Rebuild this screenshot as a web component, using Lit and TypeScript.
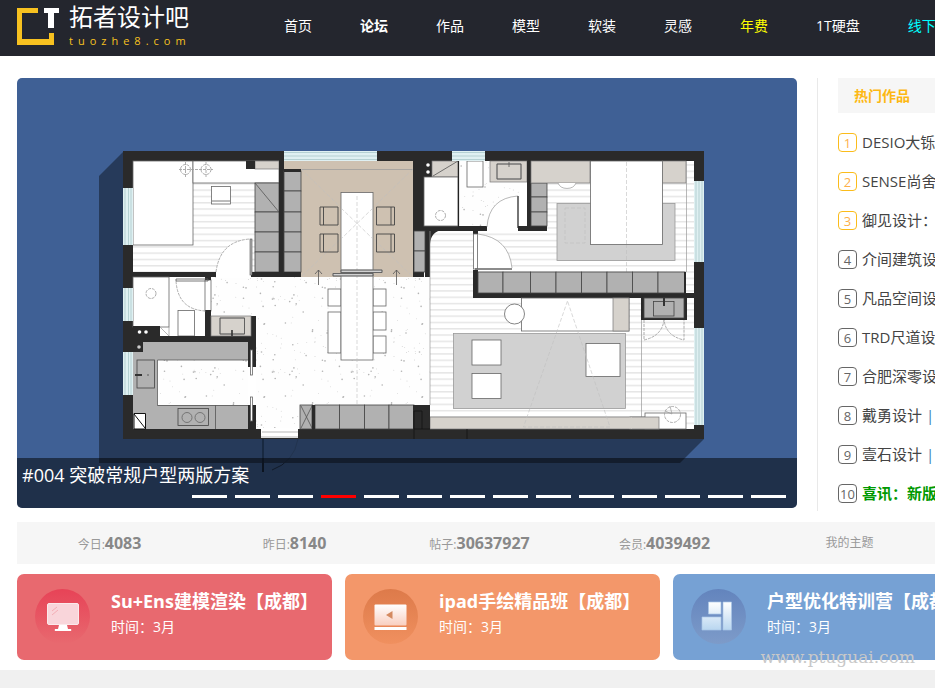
import { LitElement, html, css, svg } from "lit";
import { customElement, property, state } from "lit/decorators.js";
import { classMap } from "lit/directives/class-map.js";

const range = (n: number) => Array.from({ length: n }, (_, i) => i);

@customElement("site-header")
class SiteHeader extends LitElement {
  static styles = css`
    :host { display: block; background: #24262e; color: #fff; overflow: hidden; }
    .bar { display: flex; height: 56px; padding-left: 17px; }
    .logo { display: flex; gap: 10px; width: 243px; flex: none; color: #fff; text-decoration: none; }
    .mark { width: 42px; height: 37px; margin-top: 8px; flex: none; }
    .words { display: flex; flex-direction: column; }
    .name { font-size: 24px; line-height: 34px; white-space: nowrap; }
    .domain { font-size: 11px; line-height: 14px; letter-spacing: 5px; color: #f7c120; white-space: nowrap; }
    nav { display: flex; }
    .item { padding: 0 24px; line-height: 52px; font-size: 14px; color: #fff; text-decoration: none; white-space: nowrap; }
    .current { font-weight: 700; }
    .yellow { color: #ff0; }
    .cyan { color: #0ff; }
  `;
  private items = [
    ["首页", ""], ["论坛", "current"], ["作品", ""], ["模型", ""], ["软装", ""],
    ["灵感", ""], ["年费", "yellow"], ["1T硬盘", ""], ["线下课", "cyan"],
  ];
  render() {
    return html`<header class="bar">
      <a class="logo" href="#">
        <svg class="mark" viewBox="0 0 42 37" aria-hidden="true">
          <path fill="#f7c120" d="M0 0H21V5H5V31H32V25H37V37H0Z" />
          <path fill="#fff" d="M27 0H42V5H37V20H31V5H27Z" />
        </svg>
        <span class="words"><span class="name">拓者设计吧</span><span class="domain">tuozhe8.com</span></span>
      </a>
      <nav>${this.items.map(([t, c]) => html`<a class="item ${c}" href="#">${t}</a>`)}</nav>
    </header>`;
  }
}

type Box = [number, number, number, number];
const rects = (cls: string, list: Box[]) =>
  list.map(([x1, y1, x2, y2]) => svg`<rect class=${cls} x=${x1} y=${y1} width=${x2 - x1} height=${y2 - y1} />`);

const noise = (n: number) => {
  const v = Math.sin(n * 127.1 + 11.7) * 43758.5453;
  return v - Math.floor(v);
};
const speckles = range(70).map((i) => [
  Math.round(noise(i) * 790) / 10,
  Math.round(noise(i + 500) * 730) / 10,
  i % 3 ? 0.4 : 0.8,
]);

@customElement("floor-plan")
class FloorPlan extends LitElement {
  static styles = css`
    :host { display: block; }
    svg { display: block; width: 100%; height: 100%; }
    .wall { fill: #2a2a2a; }
    .white { fill: #fff; }
    .wood { fill: url(#wood); }
    .stone { fill: url(#stone); }
    .box { fill: #fff; stroke: #666; stroke-width: 0.8; }
    .tan { fill: #cec1b1; }
    .beige { fill: #d6d2cc; stroke: #777; stroke-width: 0.7; }
    .cab { fill: #b1b1b1; stroke: #444; stroke-width: 0.8; }
    .grey { fill: #b1b1b1; }
    .rug { fill: #d1d1d1; stroke: #999; stroke-width: 0.8; }
    .glass { fill: #dff0f2; }
    .line { fill: none; stroke: #555; stroke-width: 0.8; }
    .soft { fill: none; stroke: #999; stroke-width: 0.7; }
    .pane { fill: none; stroke: #a3c3c6; stroke-width: 0.7; }
    .dash { fill: none; stroke: #999; stroke-width: 0.8; stroke-dasharray: 3 1; }
    .faint { fill: none; stroke: #c0c0c0; stroke-width: 0.6; stroke-dasharray: 4 2; }
  `;
  render() {
    return html`<svg viewBox="17 78 780 430" role="img" aria-label="户型平面图">
      <defs>
        <pattern id="wood" width="20" height="6.3" y="4" patternUnits="userSpaceOnUse">
          <rect width="20" height="7" fill="#fff" /><rect y="3" width="20" height="1" fill="#dadada" />
        </pattern>
        <pattern id="stone" width="79" height="73" patternUnits="userSpaceOnUse">
          <rect width="79" height="73" fill="#fefefe" />
          ${speckles.map(([x, y, r]) => svg`<circle cx=${x} cy=${y} r=${r} fill="#b4b4b4" />`)}
        </pattern>
      </defs>
      <rect x="17" y="78" width="780" height="430" fill="#3f6095" />
      <path fill="#263a5a" d="M99 176L124 151L704 439L680 463H99Z" />
      <path d="M263 439V472" stroke="#182941" stroke-width="2" fill="none" />
      <path d="M298 439Q294 462 272 470" stroke="#22344f" fill="none" />
      ${rects("wall", [[123, 151, 704, 439]])}
      ${rects("white", [[133, 161, 694, 429]])}
      ${rects("wood", [[133, 183, 279, 272], [430, 231, 694, 429], [531, 161, 694, 272]])}
      ${rects("stone", [[211, 277, 430, 429], [459, 161, 527, 226]])}

      ${rects("box", [[133, 161, 193, 245], [193, 161, 279, 183], [211.5, 186.5, 230.5, 204]])}
      <path class="line" d="M212 201H230" />
      <circle class="dash" cx="185.500" cy="169.500" r="5" /><circle class="dash" cx="206" cy="169.500" r="5" />
      <path class="dash" d="M179 169.500H213M185.500 162V178M206 162V178" />
      ${rects("beige", [[255, 161, 279, 169]])}
      ${rects("cab", [[255, 183, 279, 212], [255, 212, 279, 232], [255, 232, 279, 252], [255, 252, 279, 272]])}
      <path class="line" d="M255 183L279 212" />
      <path d="M216 272Q220 241 250 239V272Z" fill="#fff" /><path class="dash" d="M216 272Q220 241 250 239" />
      ${rects("wall", [[246, 161, 255, 169], [279, 151, 284, 277], [133, 272, 216, 277], [251, 272, 301, 277]])}
      ${rects("white", [[216, 272, 251, 278]])}
      <rect class="grey" x="250" y="239" width="2" height="36" stroke="#555" stroke-width=".6" />

      ${rects("tan", [[284, 161, 413, 277]])}
      <path class="soft" d="M284 169.500H413" />
      <path class="faint" d="M301 169L413 277M413 169L301 277" />
      ${rects("cab", [[284, 171, 301, 191], [284, 191, 301, 212], [284, 212, 301, 232], [284, 232, 301, 252], [284, 252, 301, 272]])}
      ${rects("wall", [[284, 169, 301, 172], [284, 272, 301, 277]])}
      <g fill="none" stroke="#444" stroke-width=".9">
        ${[207, 234].map((y) => svg`<path d="M320 ${y}H338V${y + 18}H320ZM323.500 ${y}V${y + 18}M376.500 ${y}H394.500V${y + 18}H376.500ZM391 ${y}V${y + 18}" />`)}
      </g>
      ${rects("box", [[328, 289, 341, 306], [328, 312, 341, 353], [373, 289, 386, 306], [373, 312, 386, 330], [373, 336, 386, 353], [341, 192.5, 373, 360]])}
      <path class="faint" d="M357 196V404M341 208L373 239M373 208L341 239" />
      ${rects("rug", [[341, 270, 382, 272.5], [333, 273.5, 373, 276]])}
      <path class="line" d="M341 270H382V272.500H341ZM333 273.500H373V276H333Z" />
      <path class="line" d="M318.500 285V270M315 274L318.500 270L322 274M396.500 285V270M393 274L396.500 270L400 274" />

      ${rects("wall", [[413, 151, 424, 277], [424, 226, 487, 231], [425, 226, 430, 277], [423, 161, 432, 177]])}
      ${rects("cab", [[414, 231, 425, 251], [414, 251, 425, 272]])}
      <path class="wall" d="M429 230H443Q431 231 430 244H429Z" />
      <circle cx="428" cy="165" r="1.800" fill="#fff" /><circle cx="428" cy="172" r="1.800" fill="#fff" />
      ${rects("beige", [[432, 161, 458, 177], [490, 161, 527, 182], [497, 164, 521, 179]])}
      ${rects("box", [[424, 177, 458, 226], [467, 161, 483, 187]])}
      <path class="line" d="M433 176L458 161M497 164H521V179H497ZM509 162V167" />
      <path d="M458.500 155V227" stroke="#222" stroke-width="1.200" />
      <circle class="dash" cx="440.500" cy="215.500" r="5" />
      ${rects("white", [[487, 226, 518, 231]])}
      <path d="M487 226Q489 198 518 196V228H487Z" fill="#fff" /><path class="soft" d="M487 227Q489 198 518 196" />
      <path d="M518 196V228" stroke="#666" stroke-width="1.800" />

      ${rects("wall", [[527, 161, 531, 230], [518, 226, 547, 231]])}
      ${rects("cab", [[531, 183, 547, 197], [531, 197, 547, 212], [531, 212, 547, 226]])}
      ${rects("beige", [[531, 161, 590, 183], [662, 161, 686, 183]])}
      ${rects("rug", [[557, 203.5, 675, 260.5]])}
      <path class="faint" d="M565 208H585V243H565ZM626.500 244V272" />
      <path d="M558 183A9.500 8 0 0 0 576 183" fill="#fff" stroke="#999" stroke-width=".7" />
      <path class="soft" d="M686.500 161V272" />
      ${rects("box", [[590.5, 161, 662.5, 244.5]])}
      <path class="faint" d="M626.500 162V244" />
      ${rects("wall", [[473, 231, 478, 234], [473, 270, 478, 298], [473, 293, 704, 298]])}
      ${rects("box", [[473.5, 234, 477.5, 269]])}
      <path d="M478 234Q509 238 512 268H478Z" fill="#fff" /><path class="soft" d="M478 234Q509 238 512 268" />
      <path d="M475 269H512" stroke="#666" stroke-width="1.600" />
      ${rects("cab", [[478, 272, 503, 293], [503, 272, 530.5, 293], [530.5, 272, 556, 293], [556, 272, 581.5, 293], [581.5, 272, 607, 293], [607, 272, 632.5, 293], [632.5, 272, 658, 293], [658, 272, 685, 293]])}
      ${rects("wall", [[684, 272, 686, 294]])}

      ${rects("box", [[521.5, 298, 629, 331]])}
      ${rects("beige", [[613, 298, 629, 331]])}
      <circle class="box" cx="514.500" cy="314" r="10" />
      ${rects("wall", [[641, 298, 687, 320]])}
      ${rects("cab", [[644, 298, 684, 318], [653.5, 301.5, 674, 316]])}
      <path d="M664 298V306" stroke="#333" stroke-width="2" />
      <path class="dash" d="M644 320V340Q662 336 664 320Q666 336 684 340V320" />
      <path class="soft" d="M641.500 320V417M430 231V405" />
      ${rects("rug", [[453.5, 333.5, 625.5, 408.5]])}
      ${rects("box", [[472, 340, 501, 365], [472, 373.5, 501, 398.5], [586, 343.5, 620, 376.5]])}
      ${rects("beige", [[430, 417, 659, 429]])}
      ${rects("box", [[645, 413, 686, 429]])}
      ${rects("beige", [[630, 417, 659, 429]])}
      <rect x="629" y="417.500" width="3" height="11" fill="#d6d2cc" />
      <path class="faint" d="M567.500 301L523.500 427H610Z" />
      <circle class="dash" cx="672.500" cy="414.500" r="8" /><path class="soft" d="M670 406L672 414L665 411" />

      ${rects("cab", [[300, 405, 312, 429], [315, 405, 339.5, 429], [339.5, 405, 364.5, 429], [364.5, 405, 389, 429], [389, 405, 414, 429]])}
      <path class="line" d="M301 406L312 428M312 406L301 428" />
      ${rects("wall", [[312, 405, 315, 429], [413, 405, 430, 430]])}
      <path d="M414 439V411H422V429M467 429V439M414 429H430" stroke="#111" fill="none" stroke-width=".8" />
      ${rects("white", [[261, 428, 298, 438]])}
      <path class="soft" d="M262 432H298M261 437H298" />

      ${rects("box", [[133, 277, 169, 327], [178, 310.5, 194.5, 336], [205, 280, 211, 311]])}
      <circle class="dash" cx="151" cy="293.500" r="5" />
      ${rects("wall", [[133, 326, 160, 336], [205, 272, 211, 280], [205, 310, 211, 336], [123, 336, 256, 342], [251, 316, 256, 342]])}
      <circle cx="139.500" cy="332" r="1.800" fill="#fff" /><circle cx="146" cy="332" r="1.800" fill="#fff" />
      <path class="soft" d="M160 327L169 336V327" />
      <path class="dash" d="M176 281Q178 310 206 311" />
      <path class="line" d="M176 279H208V281H176Z" />
      ${rects("beige", [[211, 316, 251, 336], [220, 318, 244.5, 334]])}
      <path class="line" d="M220 318H244.500V334H220Z" /><path d="M232 330V336" stroke="#333" stroke-width="1.600" />

      ${rects("grey", [[133, 342, 248, 429]])}
      ${rects("stone", [[157, 360, 248, 405]])}
      <path class="line" d="M248 360H157.500V405.500H248M215.500 405V429" />
      ${rects("white", [[248, 366, 256, 405]])}
      ${rects("wall", [[248, 342, 256, 367], [248, 405, 256, 429], [133, 342, 143, 352]])}
      ${rects("box", [[250.5, 350, 252.5, 375], [250.5, 397, 252.5, 421]])}
      <circle cx="139" cy="347" r="1.800" fill="#ccc" />
      ${rects("cab", [[137, 360, 154.5, 388], [178, 408.5, 208.5, 425.5]])}
      <path d="M135 375H142" stroke="#333" stroke-width="2" /><circle cx="148" cy="375" r="1" fill="#777" />
      <g fill="none" stroke="#666" stroke-width=".8"><circle cx="187" cy="417.500" r="5" /><circle cx="200" cy="417.500" r="5" /></g>
      <path d="M134 413.500H145.500V429H134Z" fill="#fff" stroke="#111" /><path d="M134 414L145 428" stroke="#111" />

      ${rects("glass", [[284, 151, 377, 161], [452, 151, 485, 161], [123, 188, 133, 245], [123, 288, 133, 321], [123, 352, 133, 395], [694, 181, 704, 262], [694, 328, 704, 425]])}
      <path class="pane" d="M284 152.500H377M284 156H377M284 159.500H377M452 152.500H485M452 156H485M452 159.500H485" />
      <path class="pane" d="M125 188V245M128.500 188V245M131 188V245M125 288V321M128.500 288V321M131 288V321M125 352V395M128.500 352V395M131 352V395" />
      <path class="pane" d="M696 181V262M699 181V262M702 181V262M696 328V425M699 328V425M702 328V425" />
    </svg>`;
  }
}

@customElement("hero-carousel")
class HeroCarousel extends LitElement {
  static styles = css`
    :host { display: block; position: relative; overflow: hidden; border-radius: 5px; aspect-ratio: 780 / 430; }
    floor-plan { height: 100%; }
    .caption { position: absolute; left: 0; right: 0; bottom: 0; height: 50px; box-sizing: border-box; padding: 1px 5px 0; background: rgba(23, 28, 32, 0.65); background: rgba(0, 0, 0, 0.5); color: #fff; }
    .title { display: block; font-size: 18px; line-height: 32px; color: inherit; text-decoration: none; }
    .dots { display: flex; justify-content: flex-end; gap: 8px; padding: 4px 6px 0 0; }
    .dot { width: 35px; height: 3px; padding: 0; border: 0; background: #fff; }
    .on { background: #f00; }
  `;
  @state() active = 3;
  render() {
    return html`<floor-plan></floor-plan>
      <div class="caption">
        <a class="title" href="#">#004 突破常规户型两版方案</a>
        <div class="dots">${range(14).map((i) => html`<button class=${classMap({ dot: true, on: i === this.active })}
          aria-label="第${i + 1}张" @click=${() => { this.active = i; }}></button>`)}</div>
      </div>`;
  }
}

@customElement("hot-works")
class HotWorks extends LitElement {
  static styles = css`
    :host { display: block; border-left: 1px solid #e9e9e9; padding-left: 20px; overflow: hidden; height: 433px; box-sizing: border-box; }
    h2 { margin: 0; padding-left: 16px; background: #f6f6f6; color: #fdb813; font-size: 14px; line-height: 35px; white-space: nowrap; }
    ol { list-style: none; margin: 10px 0 0; padding: 0; }
    li { display: flex; align-items: center; gap: 5px; height: 39px; }
    .num { flex: none; width: 19px; height: 19px; box-sizing: border-box; border: 1px solid #666; border-radius: 4px; color: #666; font-size: 13px; line-height: 18px; text-align: center; }
    .top { border-color: #fbbc1b; color: #fdb04a; }
    .link { color: #444; font-size: 15px; line-height: 24px; padding-bottom: 2px; text-decoration: none; white-space: nowrap; }
    .news { color: #090; font-weight: 700; }
    .sep { color: #3a7fb5; }
  `;
  private works = ["DESIO大铄", "SENSE尚舍", "御见设计：", "介间建筑设计", "凡品空间设计", "TRD尺道设计", "合肥深零设计", "戴勇设计", "壹石设计", "喜讯：新版"];
  render() {
    return html`<h2>热门作品</h2>
      <ol>${this.works.map((w, i) => html`<li><span class=${classMap({ num: true, top: i < 3 })}>${i + 1}</span><a
        class=${classMap({ link: true, news: i === 9 })} href="#">${w}${i === 7 || i === 8 ? html`<span class="sep"> |</span>` : ""}</a></li>`)}</ol>`;
  }
}

@customElement("course-card")
class CourseCard extends LitElement {
  static styles = css`
    :host { display: block; flex: 0 0 315px; }
    .card { display: flex; gap: 21px; height: 86px; box-sizing: border-box; padding: 13px 0 0 18px; border-radius: 7px; color: #fff; text-decoration: none; }
    .red { background: #e8696f; }
    .orange { background: #f3976a; }
    .blue { background: #76a1d4; }
    .icon { width: 55px; height: 55px; flex: none; margin-top: 2px; }
    .text { display: flex; flex-direction: column; white-space: nowrap; }
    .title { font-size: 18px; line-height: 28px; font-weight: 700; }
    .time { font-size: 14px; line-height: 24px; }
  `;
  @property() kind = "red";
  @property() name = "";
  private icon() {
    const tops: Record<string, string[]> = { red: ["#e74357", "#e8696f"], orange: ["#dd7a4a", "#f0905f"], blue: ["#6384bd", "#7d9bc9"] };
    const [from, to] = tops[this.kind];
    const art = {
      red: svg`<rect x="12.500" y="14.500" width="31" height="21" rx="1.500" fill="#f9d5da" stroke="#fbe9eb" />
        <path d="M17 22L22 18M17 26L23 21" stroke="#f2a3ab" stroke-width=".8" />
        <path d="M24 36H32L33 40H36Q37 42 35 42H21Q19 42 20 40H23Z" fill="#fff" />`,
      orange: svg`<rect x="11.500" y="15.500" width="32" height="21" rx="1" fill="url(#paper)" />
        <path d="M23 26L29.500 22V30Z" fill="#d48a60" /><rect x="11.500" y="38" width="32" height="3" fill="#fff" />`,
      blue: svg`<path d="M17.500 13H30V25H17.500ZM32 13H40.500V41H32ZM11 28H30V41H11Z" fill="url(#paper)" stroke="#a9c6e6" stroke-width=".7" />`,
    }[this.kind];
    return html`<svg class="icon" viewBox="0 0 55 55" aria-hidden="true">
      <defs>
        <linearGradient id="disc" x2="0" y2="1"><stop stop-color=${from} /><stop offset="1" stop-color=${to} /></linearGradient>
        <linearGradient id="paper" x2="0" y2="1"><stop stop-color="#fff" /><stop offset="1" stop-color=${this.kind === "blue" ? "#b9d6f0" : "#f9cfc0"} /></linearGradient>
      </defs>
      <circle cx="27.500" cy="27.500" r="27.500" fill="url(#disc)" />${art}
    </svg>`;
  }
  render() {
    return html`<a class="card ${this.kind}" href="#">${this.icon()}
      <span class="text"><span class="title">${this.name}</span><span class="time">时间：3月</span></span></a>`;
  }
}

@customElement("app-root")
class AppRoot extends LitElement {
  static styles = css`
    :host { display: block; min-height: 100vh; background: #f0f0f0; font-family: "Open Sans", "Noto Sans CJK SC", sans-serif; overflow: hidden; }
    main { position: relative; background: #fff; padding: 22px 0 10px 17px; overflow: hidden; }
    .lead { display: flex; align-items: flex-start; gap: 20px; }
    hero-carousel { flex: 0 1 780px; }
    hot-works { flex: 1 0 118px; min-width: 0; }
    .stats { display: flex; margin-top: 11px; height: 42px; background: #f6f6f6; overflow: hidden; }
    .stat { flex: 0 0 185px; display: flex; justify-content: center; align-items: baseline; font-size: 12px; line-height: 42px; color: #999; text-decoration: none; white-space: nowrap; }
    .count { font-size: 16px; color: #888; }
    .cards { display: flex; gap: 13px; margin-top: 10px; }
    .mark { position: absolute; right: 20px; bottom: 0; font: 17px/26px "DejaVu Serif", serif; color: #c8c8c8; }
  `;
  private stats = [["今日:", "4083"], ["昨日:", "8140"], ["帖子:", "30637927"], ["会员:", "4039492"]];
  render() {
    return html`<site-header></site-header>
      <main>
        <section class="lead"><hero-carousel></hero-carousel><hot-works></hot-works></section>
        <section class="stats">
          ${this.stats.map(([k, v]) => html`<span class="stat">${k}<strong class="count">${v}</strong></span>`)}
          <a class="stat" href="#">我的主题</a>
        </section>
        <section class="cards">
          <course-card kind="red" name="Su+Ens建模渲染【成都】"></course-card>
          <course-card kind="orange" name="ipad手绘精品班【成都】"></course-card>
          <course-card kind="blue" name="户型优化特训营【成都】"></course-card>
        </section>
        <span class="mark">www.ptuguai.com</span>
      </main>`;
  }
}
